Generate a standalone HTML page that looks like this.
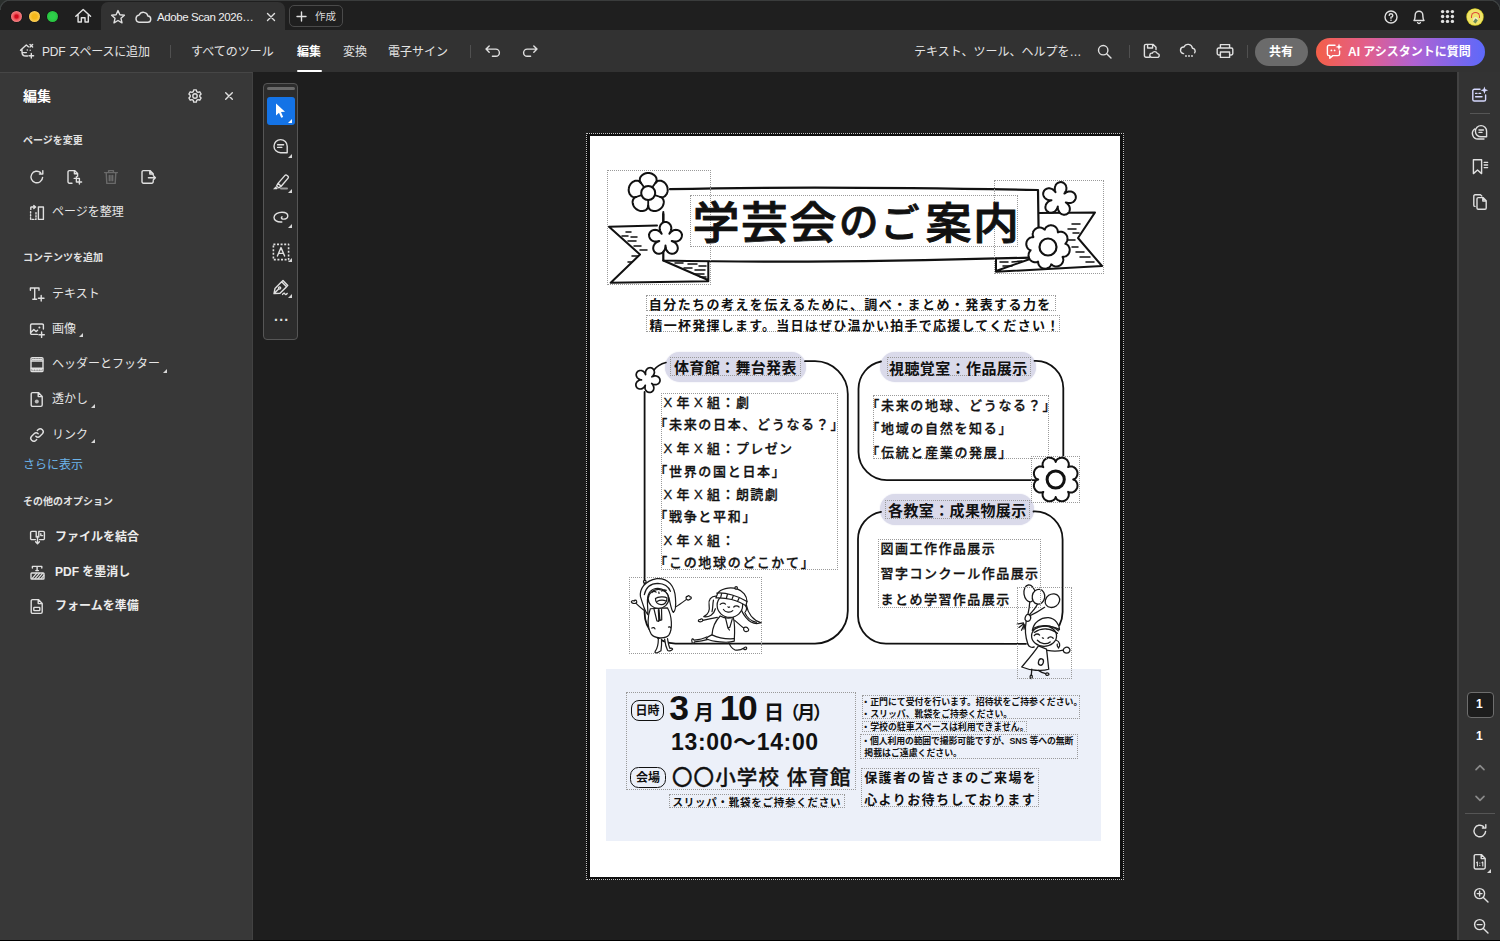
<!DOCTYPE html>
<html lang="ja">
<head>
<meta charset="utf-8">
<title>Adobe Scan</title>
<style>
*{box-sizing:border-box;margin:0;padding:0}
html,body{width:1500px;height:941px;overflow:hidden;background:#1e1e1e}
body{font-family:"Liberation Sans","Noto Sans CJK JP",sans-serif;color:#e6e6e6;font-size:12px;-webkit-font-smoothing:antialiased}
#app{position:relative;width:1500px;height:941px;overflow:hidden;background:#1e1e1e}
.abs{position:absolute}
.t{position:absolute;white-space:nowrap;line-height:1}
svg{position:absolute;overflow:visible}
.ic{fill:none;stroke:#e0e0e0;stroke-width:1.4;stroke-linecap:round;stroke-linejoin:round}
/* title bar */
#titlebar{position:absolute;left:0;top:0;width:1500px;height:30px;background:#1f1f1f}
#tab{position:absolute;left:101px;top:2px;width:184px;height:28px;background:#323232;border-radius:7px 7px 0 0}
#newbtn{position:absolute;left:289px;top:5px;width:54px;height:22px;border:1px solid #4a4a4a;border-radius:5px}
.dot{position:absolute;top:11.1px;width:11px;height:11px;border-radius:50%;box-shadow:0 0 0 .6px rgba(0,0,0,.5)}
/* toolbar */
#toolbar{position:absolute;left:0;top:30px;width:1500px;height:42px;background:#323232}
.sep{position:absolute;width:1px;background:#505050}
/* left panel */
#left{position:absolute;left:0;top:72px;width:253px;height:869px;background:#383838;border-top:1px solid #464646;border-right:1px solid #424242}
/* float bar */
#float{position:absolute;left:263px;top:83px;width:35px;height:257px;background:#2c2c2c;border:1px solid #565656;border-radius:4px}
/* right rail */
#right{position:absolute;left:1457px;top:72px;width:43px;height:869px;background:#333;border-left:2px solid #424242}
/* page */
#pagewrap{position:absolute;left:586px;top:133px;width:538px;height:747px;background:#101010;border:1px dotted #c4c4c4}
#page{position:absolute;left:589.6px;top:135.6px;width:530.6px;height:741.8px;background:#fff;color:#111;font-family:"Liberation Sans","Noto Sans CJK JP",sans-serif}
.tri{position:absolute;width:0;height:0;border-left:4px solid transparent;border-bottom:4px solid #d8d8d8}
#doc{position:absolute;left:0;top:0;width:0;height:0}
.d{position:absolute;white-space:nowrap;line-height:1;color:#111}
.db{position:absolute;border:1px dotted #9a9a9a}
</style>
</head>
<body>
<div id="app">

<!-- TITLEBAR -->
<div id="titlebar">
  <div class="abs" style="left:0;top:0;width:1500px;height:1px;background:#3a3c3c"></div>
  <div class="abs" style="left:0;top:0;width:10px;height:10px;background:radial-gradient(circle at 10px 10px,rgba(0,0,0,0) 0 9px,#3c4040 9.4px 10.2px,#2a2e2c 10.8px)"></div>
  <div class="abs" style="left:1490px;top:0;width:10px;height:10px;background:radial-gradient(circle at 0px 10px,rgba(0,0,0,0) 0 9px,#3c4040 9.4px 10.2px,#26282c 10.8px)"></div>
  <div class="dot" style="left:11.1px;background:radial-gradient(circle,#cf0a1c 0 18%,#ee5a5e 42%,#f28084 70%)"></div>
  <div class="dot" style="left:28.8px;background:radial-gradient(circle,#f5b81a 0 30%,#fbd061 75%)"></div>
  <div class="dot" style="left:46.5px;background:radial-gradient(circle,#2ed04a 0 30%,#27c03e 75%)"></div>
  <svg style="left:75px;top:8.4px" width="16.4" height="16.4" viewBox="0 0 16 16"><path class="ic" d="M0.8 8 L8 1.4 L15.2 8 M3 6.4 V13.6 H6.2 V9.6 H9.8 V13.6 H13 V6.4"/></svg>
  <div id="tab"></div>
  <svg style="left:110px;top:9px" width="16" height="16" viewBox="0 0 16 16"><path class="ic" d="M8 1.6 L9.9 5.8 L14.4 6.3 L11 9.3 L12 13.8 L8 11.5 L4 13.8 L5 9.3 L1.6 6.3 L6.1 5.8 Z"/></svg>
  <svg style="left:134px;top:10px" width="18" height="14" viewBox="0 0 18 14"><path class="ic" d="M4.6 12.2 H13.4 A3.1 3.1 0 0 0 13.9 6 A4.6 4.6 0 0 0 5.2 5 A3.7 3.7 0 0 0 4.6 12.2 Z"/></svg>
  <div class="t" id="tabtxt" style="left:157px;top:11.7px;font-size:11.5px;letter-spacing:-0.42px;color:#f0f0f0">Adobe Scan 2026…</div>
  <svg style="left:267px;top:13px" width="8" height="8" viewBox="0 0 8 8"><path class="ic" d="M0.5 0.5 L7.5 7.5 M7.5 0.5 L0.5 7.5"/></svg>
  <div id="newbtn"></div>
  <svg style="left:297px;top:12px" width="9" height="9" viewBox="0 0 9 9"><path class="ic" d="M4.5 0 V9 M0 4.5 H9"/></svg>
  <div class="t" style="left:315px;top:11px;font-size:10.5px;color:#d8d8d8">作成</div>
  <!-- right icons -->
  <svg style="left:1384px;top:10px" width="14" height="14" viewBox="0 0 14 14"><circle class="ic" cx="7" cy="7" r="6"/><path class="ic" d="M5.2 5.4 A1.8 1.8 0 1 1 7 7.3 V8.2"/><circle cx="7" cy="10.3" r="0.8" fill="#e0e0e0"/></svg>
  <svg style="left:1412px;top:9px" width="14" height="16" viewBox="0 0 14 16"><path class="ic" d="M2 11.5 C3.2 10 3 8.5 3.2 6 A3.8 3.8 0 0 1 10.8 6 C11 8.5 10.8 10 12 11.5 Z M5.6 13.6 A1.5 1.5 0 0 0 8.4 13.6"/></svg>
  <svg style="left:1441px;top:10.2px" width="13" height="13" viewBox="0 0 13 13" fill="#e0e0e0"><circle cx="1.6" cy="1.6" r="1.7"/><circle cx="6.5" cy="1.6" r="1.7"/><circle cx="11.4" cy="1.6" r="1.7"/><circle cx="1.6" cy="6.5" r="1.7"/><circle cx="6.5" cy="6.5" r="1.7"/><circle cx="11.4" cy="6.5" r="1.7"/><circle cx="1.6" cy="11.4" r="1.7"/><circle cx="6.5" cy="11.4" r="1.7"/><circle cx="11.4" cy="11.4" r="1.7"/></svg>
  <div class="abs" style="left:1467.3px;top:8.6px;width:16px;height:16px;border-radius:50%;background:#efe36a;overflow:hidden;box-shadow:0 0 0 .7px #d8d020"><div class="abs" style="left:3.5px;top:3.6px;width:9px;height:6px;border-radius:5px 5px 0 0;border:1.8px solid #dc4a3c;border-bottom:none"></div><div class="abs" style="left:6px;top:8px;width:5px;height:5px;border-radius:50%;background:#f3ecc0"></div><div class="abs" style="left:7px;top:10px;width:3px;height:4px;background:#6a8a5a;transform:rotate(35deg)"></div></div>
</div>

<!-- TOOLBAR -->
<div id="toolbar">
  <!-- pdf space icon -->
  <svg style="left:19px;top:13px" width="17" height="17" viewBox="0 0 17 17"><path class="ic" d="M1.5 7.2 L7.3 2 L9.4 3.8 M3 6.3 V9.2 C3 11.8 4.2 13 7 13 H8.6 M3.4 9.6 H7.4"/><path class="ic" d="M11 1.5 L13.6 4.1 M13.6 1.5 L11 4.1 M12.3 10.4 V15 M10 12.7 H14.6" /><circle cx="8.3" cy="7" r=".8" fill="#e0e0e0"/><circle cx="11.2" cy="7.3" r=".7" fill="#e0e0e0"/></svg>
  <div class="t" style="left:42px;top:16px;font-size:12px;letter-spacing:-0.2px;color:#e4e4e4">PDF スペースに追加</div>
  <div class="sep" style="left:170px;top:15px;height:13px"></div>
  <div class="t" style="left:191px;top:16px;font-size:12px;color:#e4e4e4">すべてのツール</div>
  <div class="t" style="left:297px;top:16px;font-size:12px;color:#fff;font-weight:700">編集</div>
  <div class="abs" style="left:297px;top:40px;width:25px;height:2px;background:#fff;border-radius:1px"></div>
  <div class="t" style="left:343px;top:16px;font-size:12px;color:#e4e4e4">変換</div>
  <div class="t" style="left:388px;top:16px;font-size:12px;color:#e4e4e4">電子サイン</div>
  <div class="sep" style="left:470px;top:15px;height:13px"></div>
  <svg style="left:485px;top:15px" width="16" height="13" viewBox="0 0 16 13"><path class="ic" d="M4.2 1 L1 4.1 L4.2 7.2 M1.2 4.1 H10.8 A3.6 3.6 0 0 1 10.8 11.3 H7.4"/></svg>
  <svg style="left:522px;top:15px" width="16" height="13" viewBox="0 0 16 13"><path class="ic" d="M11.8 1 L15 4.1 L11.8 7.2 M14.8 4.1 H5.2 A3.6 3.6 0 0 0 5.2 11.3 H8.6"/></svg>
  <!-- right side -->
  <div class="t" style="left:914px;top:16px;font-size:12px;color:#e4e4e4">テキスト、ツール、ヘルプを…</div>
  <svg style="left:1097px;top:14px" width="15" height="15" viewBox="0 0 15 15"><circle class="ic" cx="6.2" cy="6.2" r="4.7"/><path class="ic" d="M9.7 9.7 L14 14"/></svg>
  <div class="sep" style="left:1129px;top:15px;height:13px"></div>
  <svg style="left:1143px;top:13px" width="17" height="16" viewBox="0 0 17 16"><path class="ic" d="M6.5 14.2 H3 A1.6 1.6 0 0 1 1.4 12.6 V3 A1.6 1.6 0 0 1 3 1.4 H10.2 L13 4.2 V6.6 M4.6 1.6 V5 H9.6 V1.6"/><path class="ic" d="M8.6 14.4 H14.2 A1.9 1.9 0 0 0 14.4 10.6 A2.8 2.8 0 0 0 9.2 10.2 A2.1 2.1 0 0 0 8.6 14.4 Z"/></svg>
  <svg style="left:1179px;top:14px" width="18" height="14" viewBox="0 0 18 14"><path class="ic" d="M4.6 9.6 A3.3 3.3 0 0 1 5 3 A4.4 4.4 0 0 1 13.4 4.2 A2.9 2.9 0 0 1 15.6 8.8"/><circle cx="7" cy="12" r=".9" fill="#e0e0e0"/><circle cx="10" cy="12" r=".9" fill="#e0e0e0"/><circle cx="13" cy="12" r=".9" fill="#e0e0e0"/></svg>
  <svg style="left:1216px;top:13px" width="18" height="16" viewBox="0 0 18 16"><path class="ic" d="M4.4 5 V1.6 H13.6 V5 M4.4 12 H2.6 A1.4 1.4 0 0 1 1.2 10.6 V6.4 A1.4 1.4 0 0 1 2.6 5 H15.4 A1.4 1.4 0 0 1 16.8 6.4 V10.6 A1.4 1.4 0 0 1 15.4 12 H13.6 M4.4 9 H13.6 V14.4 H4.4 Z"/></svg>
  <div class="sep" style="left:1247px;top:15px;height:13px"></div>
  <div class="abs" style="left:1255px;top:7.6px;width:53px;height:28.2px;border-radius:15px;background:#6b6b6b"></div>
  <div class="t" style="left:1269px;top:16px;font-size:12px;color:#fff;font-weight:700">共有</div>
  <div class="abs" style="left:1316px;top:7.6px;width:169px;height:28.2px;border-radius:15px;background:linear-gradient(90deg,#f45f48 0%,#e25f8c 30%,#b062d2 58%,#5d69fa 100%)"></div>
  <svg style="left:1326px;top:13px" width="17" height="17" viewBox="0 0 17 17"><path class="ic" style="stroke:#fff" d="M9 2.2 H3 A1.6 1.6 0 0 0 1.4 3.8 V11 A1.6 1.6 0 0 0 3 12.6 H3.8 V15.2 L6.8 12.6 H12 A1.6 1.6 0 0 0 13.6 11 V8"/><path fill="#fff" d="M13 0.4 L13.9 3 L16.5 3.9 L13.9 4.8 L13 7.4 L12.1 4.8 L9.5 3.9 L12.1 3 Z"/><circle cx="5.4" cy="7.4" r=".9" fill="#fff"/><circle cx="8.6" cy="7.4" r=".9" fill="#fff"/></svg>
  <div class="t" style="left:1348px;top:16px;font-size:12px;color:#fff;font-weight:700">AI アシスタントに質問</div>
</div>

<!-- LEFT PANEL -->
<div id="left">
  <div class="t" style="left:23px;top:16px;font-size:14px;font-weight:700;color:#fff">編集</div>
  <!-- gear -->
  <svg style="left:187px;top:15px" width="16" height="16" viewBox="0 0 16 16"><path class="ic" d="M6.7 1.2 H9.3 L9.7 3 L11 3.7 L12.8 3.1 L14.1 5.3 L12.8 6.6 V8 L14.1 9.3 L12.8 11.5 L11 10.9 L9.7 11.6 L9.3 13.4 H6.7 L6.3 11.6 L5 10.9 L3.2 11.5 L1.9 9.3 L3.2 8 V6.6 L1.9 5.3 L3.2 3.1 L5 3.7 L6.3 3 Z" transform="translate(0,0.7)"/><circle class="ic" cx="8" cy="8" r="2.2"/></svg>
  <svg style="left:225px;top:19px" width="8" height="8" viewBox="0 0 8 8"><path class="ic" d="M0.7 0.7 L7.3 7.3 M7.3 0.7 L0.7 7.3"/></svg>
  <div class="t" style="left:23px;top:63px;font-size:10px;font-weight:700;color:#e2e2e2">ページを変更</div>
  <!-- rotate -->
  <svg style="left:29px;top:96px" width="16" height="16" viewBox="0 0 16 16"><path class="ic" d="M13.6 8.4 A5.8 5.8 0 1 1 11.6 3.6 M13.8 1.6 V5 H10.4"/></svg>
  <!-- insert page -->
  <svg style="left:66px;top:96px" width="17" height="17" viewBox="0 0 17 17"><path class="ic" d="M6 14.2 H3.4 A1.4 1.4 0 0 1 2 12.8 V3 A1.4 1.4 0 0 1 3.4 1.6 H8.6 L11.6 4.6 V7.2 M8.4 1.8 V4.8 H11.4"/><path class="ic" d="M8.2 9.4 H13.4 V15 M10.4 7.6 V13 H15.6" /></svg>
  <!-- trash (disabled) -->
  <svg style="left:103px;top:96px" width="16" height="16" viewBox="0 0 16 16"><path class="ic" style="stroke:#6a6a6a" d="M1.6 3.6 H14.4 M5.6 3.4 V1.6 H10.4 V3.4 M3.2 3.8 L3.8 14.4 H12.2 L12.8 3.8 M6.3 6.4 V11.8 M8 6.4 V11.8 M9.7 6.4 V11.8"/></svg>
  <!-- extract -->
  <svg style="left:140px;top:96px" width="17" height="17" viewBox="0 0 17 17"><path class="ic" d="M13.2 11.6 V12.8 A1.4 1.4 0 0 1 11.8 14.2 H3.4 A1.4 1.4 0 0 1 2 12.8 V3 A1.4 1.4 0 0 1 3.4 1.6 H10 L13.2 4.8 V6 M9.8 1.8 V5 H13 M8.4 8.8 H15.4 M13.4 6.8 L15.4 8.8 L13.4 10.8"/></svg>
  <!-- organize -->
  <svg style="left:29px;top:132px" width="16" height="16" viewBox="0 0 16 16"><path class="ic" d="M9.4 2 H14.4 V14.4 H9.4 Z"/><path class="ic" style="stroke-dasharray:1.4 1.7" d="M1.6 6.6 V14.4 H7 V6.6"/><path class="ic" d="M2.2 2 H6.6 M4.8 0.6 L6.6 2 L4.8 3.6 M1.8 2.2 V4.4"/></svg>
  <div class="t" style="left:52px;top:133px;font-size:12px">ページを整理</div>
  <div class="t" style="left:23px;top:180px;font-size:10px;font-weight:700;color:#e2e2e2">コンテンツを追加</div>
  <!-- text -->
  <svg style="left:29px;top:213px" width="17" height="17" viewBox="0 0 17 17"><path class="ic" d="M1.4 4.2 V2 H10 V4.2 M5.7 2.2 V13 M3.8 13.2 H7.6 M12.2 9.4 V15 M9.4 12.2 H15"/></svg>
  <div class="t" style="left:52px;top:215px;font-size:12px">テキスト</div>
  <!-- image -->
  <svg style="left:29px;top:249px" width="17" height="17" viewBox="0 0 17 17"><path class="ic" d="M8.4 12.4 H2.8 A1.2 1.2 0 0 1 1.6 11.2 V3.2 A1.2 1.2 0 0 1 2.8 2 H13.2 A1.2 1.2 0 0 1 14.4 3.2 V7 M1.8 10.4 L4.8 7.6 L7 9.6 L8.6 8.2 M12.6 10 V15.4 M9.9 12.7 H15.3"/><circle cx="10.4" cy="5.4" r="1" fill="#e0e0e0"/></svg>
  <div class="t" style="left:52px;top:250px;font-size:12px">画像</div>
  <div class="tri" style="left:79px;top:260px"></div>
  <!-- header/footer -->
  <svg style="left:29px;top:283px" width="16" height="17" viewBox="0 0 16 17"><rect class="ic" x="2" y="1.6" width="12" height="14" rx="1.2"/><path class="ic" d="M2.2 5 H13.8 M2.2 12.2 H13.8"/><path class="ic" style="stroke-dasharray:1.2 1.4;stroke-width:1.6" d="M3.6 3.4 H12.6 M3.6 13.9 H12.6"/></svg>
  <div class="t" style="left:52px;top:285px;font-size:12px">ヘッダーとフッター</div>
  <div class="tri" style="left:163px;top:296px"></div>
  <!-- watermark -->
  <svg style="left:29px;top:318px" width="16" height="17" viewBox="0 0 16 17"><path class="ic" d="M3.6 1.6 H9.4 L13.2 5.4 V14 A1.4 1.4 0 0 1 11.8 15.4 H3.6 A1.4 1.4 0 0 1 2.2 14 V3 A1.4 1.4 0 0 1 3.6 1.6 Z M9.2 1.8 V5.6 H13"/><circle cx="7.8" cy="10.4" r="2" fill="#bdbdbd"/></svg>
  <div class="t" style="left:52px;top:320px;font-size:12px">透かし</div>
  <div class="tri" style="left:91px;top:331px"></div>
  <!-- link -->
  <svg style="left:29px;top:354px" width="16" height="16" viewBox="0 0 16 16"><path class="ic" d="M6.8 9.2 A2.9 2.9 0 0 0 10.9 9.2 L13.4 6.7 A2.9 2.9 0 0 0 9.3 2.6 L8.3 3.6 M9.2 6.8 A2.9 2.9 0 0 0 5.1 6.8 L2.6 9.3 A2.9 2.9 0 0 0 6.7 13.4 L7.7 12.4"/></svg>
  <div class="t" style="left:52px;top:356px;font-size:12px">リンク</div>
  <div class="tri" style="left:91px;top:366px"></div>
  <div class="t" style="left:23px;top:386px;font-size:12px;color:#6cb4ea">さらに表示</div>
  <div class="t" style="left:23px;top:424px;font-size:10px;font-weight:700;color:#e2e2e2">その他のオプション</div>
  <!-- combine -->
  <svg style="left:29px;top:456px" width="17" height="17" viewBox="0 0 17 17"><path class="ic" d="M6.4 10.6 H2.8 A1.2 1.2 0 0 1 1.6 9.4 V3.6 A1.2 1.2 0 0 1 2.8 2.4 H7.2 V8 M10.6 10.6 H14.2 A1.2 1.2 0 0 0 15.4 9.4 V3.6 A1.2 1.2 0 0 0 14.2 2.4 H9.8 V8 M8.5 7.4 V14.6 M6.6 12.8 L8.5 14.8 L10.4 12.8 M11.8 4.6 V6.6 H13.6"/></svg>
  <div class="t" style="left:55px;top:458px;font-size:12px;font-weight:700;color:#ececec">ファイルを結合</div>
  <!-- redact -->
  <svg style="left:29px;top:491px" width="17" height="17" viewBox="0 0 17 17"><path class="ic" d="M3.4 4 V2.4 H12.8 V4 M8.1 2.6 V6.4 M6.8 6.6 H9.4"/><rect class="ic" x="2" y="9" width="13" height="6" rx=".8"/><path class="ic" style="stroke-width:1.2" d="M3 14.6 L7.6 9.4 M6 14.6 L10.6 9.4 M9 14.6 L13.6 9.4 M12 14.6 L14.8 11.4"/></svg>
  <div class="t" style="left:55px;top:493px;font-size:12px;font-weight:700;color:#ececec">PDF を墨消し</div>
  <!-- form -->
  <svg style="left:29px;top:525px" width="16" height="17" viewBox="0 0 16 17"><path class="ic" d="M3.6 1.6 H9.4 L13.2 5.4 V14 A1.4 1.4 0 0 1 11.8 15.4 H3.6 A1.4 1.4 0 0 1 2.2 14 V3 A1.4 1.4 0 0 1 3.6 1.6 Z M9.2 1.8 V5.6 H13"/><rect class="ic" x="4.8" y="9.4" width="6" height="3.2" rx=".5"/></svg>
  <div class="t" style="left:55px;top:527px;font-size:12px;font-weight:700;color:#ececec">フォームを準備</div>
</div>

<!-- FLOAT BAR -->
<div id="float">
  <div class="abs" style="left:3px;top:3.3px;width:28px;height:3px;border-radius:2px;background:#6a6a6a"></div>
  <div class="abs" style="left:3px;top:13px;width:28px;height:28px;border-radius:3px;background:#1473e6"></div>
  <svg style="left:11px;top:19px" width="12" height="16" viewBox="0 0 12 16"><path fill="#fff" d="M1 0.6 V12.4 L4 9.8 L6.2 14.8 L8.2 13.9 L6 9 L10 8.8 Z"/></svg>
  <div class="tri" style="left:23.5px;top:35px;border-bottom-color:#fff"></div>
  <!-- comment -->
  <svg style="left:8px;top:54px" width="18" height="18" viewBox="0 0 18 18"><path class="ic" d="M8.6 1.6 A6.6 6.6 0 1 0 8.6 14.8 H15.2 V8.2 A6.6 6.6 0 0 0 8.6 1.6 Z M5.6 6.8 H11.6 M5.6 9.4 H9.8"/></svg>
  <div class="tri" style="left:23.5px;top:70px"></div>
  <!-- highlight -->
  <svg style="left:8px;top:89px" width="19" height="18" viewBox="0 0 19 18"><path class="ic" d="M6 10.4 L13 2.4 A1.3 1.3 0 0 1 14.9 2.3 L16 3.3 A1.3 1.3 0 0 1 16.1 5.1 L9.2 13.2 Z M6 10.4 L4.6 13 L6.8 14.8 L9.2 13.2"/><path fill="#e0e0e0" d="M1 16.2 L3.6 13.4 L5.8 15.2 L5 16.2 Z"/><path class="ic" style="stroke:#9a9a9a;stroke-width:2" d="M9 15.4 H15"/></svg>
  <div class="tri" style="left:23.5px;top:105px"></div>
  <!-- lasso -->
  <svg style="left:8px;top:125px" width="19" height="17" viewBox="0 0 19 17"><path class="ic" d="M9.8 13 C5 13.4 2 11.2 2 8.4 C2 5.4 6 3.2 10 3.2 C13.6 3.2 15.8 4.8 15.8 7 C15.8 9.4 13 10.6 10.6 10 C9.2 9.6 9 8.4 10 7.8"/></svg>
  <div class="tri" style="left:23.5px;top:140px"></div>
  <!-- text select -->
  <svg style="left:8px;top:159px" width="18" height="18" viewBox="0 0 18 18"><rect class="ic" style="stroke-dasharray:2 1.6;stroke-linecap:butt;stroke-width:1.6" x="1.4" y="1.4" width="15.2" height="15.2"/><path class="ic" d="M5.4 13 L9 4.6 L12.6 13 M6.6 10.4 H11.4"/></svg>
  <div class="tri" style="left:23.5px;top:174px"></div>
  <!-- sign pen -->
  <svg style="left:8px;top:195px" width="19" height="18" viewBox="0 0 19 18"><path class="ic" d="M2 14.6 L3 9.4 L9.6 2.8 L14.6 7.8 L8 14.2 L2 14.6 Z M2.4 14.2 L6.6 10 M8.4 4 L11 1.6 L15.8 6.4 L13.4 9"/><circle class="ic" cx="7.6" cy="9" r="1.1"/><path class="ic" d="M10.6 15.4 C11.6 13.8 12.6 13.8 13 15 C13.4 16 14.4 15.8 15.2 14.4"/></svg>
  <div class="tri" style="left:23.5px;top:210px"></div>
  <div class="t" style="left:10px;top:229px;font-size:14px;color:#e0e0e0;letter-spacing:0.5px;font-weight:700">···</div>
</div>

<!-- RIGHT RAIL -->
<div id="right">
  <!-- AI panel icon -->
  <svg style="left:12px;top:14px" width="18" height="18" viewBox="0 0 18 18"><path class="ic" style="stroke:#d6d9ff" d="M9 3.2 H3.4 A1.6 1.6 0 0 0 1.8 4.8 V13.4 A1.6 1.6 0 0 0 3.4 15 H13 A1.6 1.6 0 0 0 14.6 13.4 V9 M4.6 7.4 H6 M8 7.4 H9.6 M4.6 10.8 H11"/><path fill="#d6d9ff" d="M13.4 0.4 L14.4 3.2 L17.2 4.2 L14.4 5.2 L13.4 8 L12.4 5.2 L9.6 4.2 L12.4 3.2 Z"/></svg>
  <div class="abs" style="left:11px;top:41px;width:20px;height:1px;background:#555"></div>
  <!-- comments -->
  <svg style="left:12px;top:52px" width="18" height="18" viewBox="0 0 18 18"><path class="ic" d="M10 1.6 A5.6 5.6 0 1 0 10 12.8 H15.6 V7.2 A5.6 5.6 0 0 0 10 1.6 Z M8 6 H12.4 M8 8.4 H11"/><path class="ic" d="M3.6 5 A5.6 5.6 0 0 0 7.4 15 H13"/></svg>
  <!-- bookmark -->
  <svg style="left:12px;top:86px" width="18" height="18" viewBox="0 0 18 18"><path class="ic" d="M2.4 1.8 H10.6 V15.6 L6.5 12 L2.4 15.6 Z M13.2 4.4 H16.6 M13.2 7 H16.6 M13.2 9.6 H16.6"/></svg>
  <!-- pages -->
  <svg style="left:12px;top:121px" width="18" height="18" viewBox="0 0 18 18"><path class="ic" d="M7.2 4.6 H12 L15.2 7.8 V15 A1.2 1.2 0 0 1 14 16.2 H7.2 A1.2 1.2 0 0 1 6 15 V5.8 A1.2 1.2 0 0 1 7.2 4.6 Z M11.8 4.8 V8 H15 M4 13.4 A1.2 1.2 0 0 1 2.8 12.2 V3 A1.2 1.2 0 0 1 4 1.8 H9.4 L10.8 3"/></svg>
  <!-- page number -->
  <div class="abs" style="left:8px;top:620px;width:27px;height:26px;border:1px solid #6e6e6e;border-radius:4px;background:#1d1d1d"></div>
  <div class="t" style="left:17px;top:626px;font-size:12px;color:#fff;font-weight:700">1</div>
  <div class="t" style="left:17px;top:658px;font-size:12px;color:#fff;font-weight:700">1</div>
  <svg style="left:16px;top:692px" width="10" height="7" viewBox="0 0 10 7"><path class="ic" style="stroke:#8c8c8c;stroke-width:1.6" d="M1 5.6 L5 1.6 L9 5.6"/></svg>
  <svg style="left:16px;top:723px" width="10" height="7" viewBox="0 0 10 7"><path class="ic" style="stroke:#8c8c8c;stroke-width:1.6" d="M1 1.4 L5 5.4 L9 1.4"/></svg>
  <div class="abs" style="left:6px;top:741px;width:30px;height:1px;background:#555"></div>
  <svg style="left:13px;top:751px" width="16" height="16" viewBox="0 0 16 16"><path class="ic" d="M13.6 8.4 A5.8 5.8 0 1 1 11.6 3.6 M13.8 1.6 V5 H10.4"/></svg>
  <svg style="left:13px;top:781px" width="16" height="18" viewBox="0 0 16 18"><path class="ic" d="M3.6 1.6 H9.4 L13.2 5.4 V14.6 A1.4 1.4 0 0 1 11.8 16 H3.6 A1.4 1.4 0 0 1 2.2 14.6 V3 A1.4 1.4 0 0 1 3.6 1.6 Z M9.2 1.8 V5.6 H13"/><path class="ic" style="stroke-width:1.1" d="M4.6 9.6 L5.4 9 V13 M10 9.6 L10.8 9 V13"/><circle cx="7.8" cy="10" r=".6" fill="#e0e0e0"/><circle cx="7.8" cy="12.4" r=".6" fill="#e0e0e0"/></svg>
  <div class="tri" style="left:28px;top:797px"></div>
  <svg style="left:14.2px;top:814.6px" width="16" height="16" viewBox="0 0 16 16"><circle class="ic" cx="6.6" cy="6.6" r="5"/><path class="ic" d="M10.4 10.4 L15 15 M4.2 6.6 H9 M6.6 4.2 V9"/></svg>
  <svg style="left:14.2px;top:846.2px" width="16" height="16" viewBox="0 0 16 16"><circle class="ic" cx="6.6" cy="6.6" r="5"/><path class="ic" d="M10.4 10.4 L15 15 M4.2 6.6 H9"/></svg>
</div>

<div class="abs" style="left:0;top:940px;width:1500px;height:1px;background:#000"></div>
<!-- PAGE -->
<div id="pagewrap"></div>
<div id="page"></div>
<!-- DOC START -->
<div id="doc">
<div class="abs" style="left:605.5px;top:668.5px;width:495px;height:172.5px;background:#ecf0f9"></div>
<div class="abs" style="left:665px;top:351.8px;width:140.5px;height:30.599999999999966px;border-radius:15.3px;background:#dadaea;box-shadow:0 0 1.5px #dadaea"></div>
<div class="abs" style="left:880px;top:351.8px;width:156.0px;height:30.599999999999966px;border-radius:15.3px;background:#dadaea;box-shadow:0 0 1.5px #dadaea"></div>
<div class="abs" style="left:880px;top:494.3px;width:154.0px;height:30.69999999999999px;border-radius:15.3px;background:#dadaea;box-shadow:0 0 1.5px #dadaea"></div>
<svg style="left:0;top:0" width="1500" height="941" viewBox="0 0 1500 941">
<path fill="none" stroke="#111" stroke-linecap="round" stroke-linejoin="round" stroke-width="2.2" d="M670 189.2 C760 187 860 186.6 1038 190 L1039 258"/>
<path fill="none" stroke="#111" stroke-linecap="round" stroke-linejoin="round" stroke-width="2.2" d="M663.3 214 L663.3 260.5 C760 262.5 900 261.5 1030 257.6"/>
<path fill="none" stroke="#111" stroke-linecap="round" stroke-linejoin="round" stroke-width="2" d="M657 225.6 L609 226.8 L640 254.5 L610.7 282.8 L708.3 281.2 L708.3 262 M663.3 260.5 L708 280"/>
<path fill="none" stroke="#111" stroke-linecap="round" stroke-linejoin="round" stroke-width="1.5" d="M626 232 L631 232"/>
<path fill="none" stroke="#111" stroke-linecap="round" stroke-linejoin="round" stroke-width="1.5" d="M622 236 L628 236"/>
<path fill="none" stroke="#111" stroke-linecap="round" stroke-linejoin="round" stroke-width="1.5" d="M631 237 L637 237"/>
<path fill="none" stroke="#111" stroke-linecap="round" stroke-linejoin="round" stroke-width="1.5" d="M628 241 L636 241"/>
<path fill="none" stroke="#111" stroke-linecap="round" stroke-linejoin="round" stroke-width="1.5" d="M634 246 L641 246"/>
<path fill="none" stroke="#111" stroke-linecap="round" stroke-linejoin="round" stroke-width="1.5" d="M640 250 L647 250"/>
<path fill="none" stroke="#111" stroke-linecap="round" stroke-linejoin="round" stroke-width="1.5" d="M632 256 L638 256"/>
<path fill="none" stroke="#111" stroke-linecap="round" stroke-linejoin="round" stroke-width="1.5" d="M628 262 L632 262"/>
<path fill="none" stroke="#111" stroke-linecap="round" stroke-linejoin="round" stroke-width="1.5" d="M675 263 L683 263"/>
<path fill="none" stroke="#111" stroke-linecap="round" stroke-linejoin="round" stroke-width="1.5" d="M688 264 L697 264"/>
<path fill="none" stroke="#111" stroke-linecap="round" stroke-linejoin="round" stroke-width="1.5" d="M699 266 L706 266"/>
<path fill="none" stroke="#111" stroke-linecap="round" stroke-linejoin="round" stroke-width="1.5" d="M684 268 L692 268"/>
<path fill="none" stroke="#111" stroke-linecap="round" stroke-linejoin="round" stroke-width="1.5" d="M695 270 L705 270"/>
<path fill="none" stroke="#111" stroke-linecap="round" stroke-linejoin="round" stroke-width="1.5" d="M694 274 L704 274"/>
<path fill="none" stroke="#111" stroke-linecap="round" stroke-linejoin="round" stroke-width="1.5" d="M700 277 L706 277"/>
<path fill="none" stroke="#111" stroke-linecap="round" stroke-linejoin="round" stroke-width="2" d="M1039 213 L1095 212.4 L1078 238 L1102 266 L996 271.8 L996 258.5 M996 271 L1030 259"/>
<path fill="none" stroke="#111" stroke-linecap="round" stroke-linejoin="round" stroke-width="1.5" d="M1072 224 L1080 224"/>
<path fill="none" stroke="#111" stroke-linecap="round" stroke-linejoin="round" stroke-width="1.5" d="M1068 229 L1076 229"/>
<path fill="none" stroke="#111" stroke-linecap="round" stroke-linejoin="round" stroke-width="1.5" d="M1073 233 L1079 233"/>
<path fill="none" stroke="#111" stroke-linecap="round" stroke-linejoin="round" stroke-width="1.5" d="M1068 240 L1075 240"/>
<path fill="none" stroke="#111" stroke-linecap="round" stroke-linejoin="round" stroke-width="1.5" d="M1072 247 L1078 247"/>
<path fill="none" stroke="#111" stroke-linecap="round" stroke-linejoin="round" stroke-width="1.5" d="M1076 252 L1084 252"/>
<path fill="none" stroke="#111" stroke-linecap="round" stroke-linejoin="round" stroke-width="1.5" d="M1080 257 L1090 257"/>
<path fill="none" stroke="#111" stroke-linecap="round" stroke-linejoin="round" stroke-width="1.5" d="M1086 262 L1094 262"/>
<path fill="none" stroke="#111" stroke-linecap="round" stroke-linejoin="round" stroke-width="1.5" d="M1000 262 L1008 262"/>
<path fill="none" stroke="#111" stroke-linecap="round" stroke-linejoin="round" stroke-width="1.5" d="M1003 266 L1012 266"/>
<path fill="none" stroke="#111" stroke-linecap="round" stroke-linejoin="round" stroke-width="1.5" d="M1012 262 L1022 261"/>
<path fill="#fff" stroke="#111" stroke-linecap="round" stroke-linejoin="round" stroke-width="2" d="M667.1 193.0 L666.9 193.6 L666.6 194.2 L666.2 194.7 L665.8 195.2 L665.4 195.7 L664.8 196.2 L664.2 196.6 L663.5 196.9 L662.5 197.2 L660.1 196.9 L662.2 198.0 L662.8 198.8 L663.2 199.5 L663.5 200.2 L663.7 200.9 L663.8 201.6 L663.8 202.2 L663.7 202.9 L663.6 203.5 L663.5 204.1 L663.3 204.7 L663.1 205.3 L662.8 205.9 L662.5 206.4 L662.2 207.0 L661.8 207.5 L661.4 207.9 L660.9 208.4 L660.5 208.8 L660.0 209.2 L659.4 209.5 L658.9 209.9 L658.3 210.1 L657.8 210.4 L657.2 210.6 L656.6 210.8 L655.9 210.9 L655.3 211.0 L654.7 211.0 L654.0 211.0 L653.4 210.9 L652.8 210.8 L652.1 210.7 L651.5 210.4 L650.9 210.2 L650.3 209.8 L649.7 209.3 L649.2 208.7 L648.7 207.9 L648.2 205.5 L647.7 207.9 L647.2 208.7 L646.7 209.3 L646.1 209.8 L645.5 210.2 L644.9 210.4 L644.3 210.7 L643.6 210.8 L643.0 210.9 L642.4 211.0 L641.7 211.0 L641.1 211.0 L640.5 210.9 L639.8 210.8 L639.2 210.6 L638.6 210.4 L638.1 210.1 L637.5 209.9 L637.0 209.5 L636.4 209.2 L635.9 208.8 L635.5 208.4 L635.0 207.9 L634.6 207.5 L634.2 207.0 L633.9 206.4 L633.6 205.9 L633.3 205.3 L633.1 204.7 L632.9 204.1 L632.8 203.5 L632.7 202.9 L632.6 202.2 L632.6 201.6 L632.7 200.9 L632.9 200.2 L633.2 199.5 L633.6 198.8 L634.2 198.0 L636.3 196.9 L633.9 197.2 L632.9 196.9 L632.2 196.6 L631.6 196.2 L631.0 195.7 L630.6 195.2 L630.2 194.7 L629.8 194.2 L629.5 193.6 L629.3 193.0 L629.1 192.4 L628.9 191.8 L628.8 191.2 L628.7 190.5 L628.7 189.9 L628.7 189.3 L628.8 188.7 L628.9 188.0 L629.0 187.4 L629.2 186.8 L629.4 186.2 L629.6 185.7 L629.9 185.1 L630.3 184.6 L630.6 184.0 L631.0 183.5 L631.4 183.1 L631.9 182.6 L632.4 182.2 L632.9 181.9 L633.4 181.6 L634.0 181.3 L634.6 181.0 L635.3 180.8 L635.9 180.7 L636.6 180.7 L637.4 180.7 L638.2 180.9 L639.1 181.2 L640.9 182.9 L639.8 180.7 L639.8 179.7 L639.9 178.9 L640.0 178.2 L640.3 177.5 L640.6 176.9 L641.0 176.4 L641.4 175.9 L641.9 175.4 L642.4 175.0 L642.9 174.6 L643.4 174.3 L644.0 174.0 L644.5 173.7 L645.1 173.5 L645.7 173.3 L646.3 173.2 L646.9 173.1 L647.6 173.0 L648.2 173.0 L648.8 173.0 L649.5 173.1 L650.1 173.2 L650.7 173.3 L651.3 173.5 L651.9 173.7 L652.4 174.0 L653.0 174.3 L653.5 174.6 L654.0 175.0 L654.5 175.4 L655.0 175.9 L655.4 176.4 L655.8 176.9 L656.1 177.5 L656.4 178.2 L656.5 178.9 L656.6 179.7 L656.6 180.7 L655.5 182.9 L657.3 181.2 L658.2 180.9 L659.0 180.7 L659.8 180.7 L660.5 180.7 L661.1 180.8 L661.8 181.0 L662.4 181.3 L663.0 181.6 L663.5 181.9 L664.0 182.2 L664.5 182.6 L665.0 183.1 L665.4 183.5 L665.8 184.0 L666.1 184.6 L666.5 185.1 L666.8 185.7 L667.0 186.2 L667.2 186.8 L667.4 187.4 L667.5 188.0 L667.6 188.7 L667.7 189.3 L667.7 189.9 L667.7 190.5 L667.6 191.2 L667.5 191.8 L667.3 192.4 Z"/>
<path fill="none" stroke="#111" stroke-linecap="round" stroke-linejoin="round" stroke-width="1.8" d="M652.3 187.3 L655.7 182.6"/>
<path fill="none" stroke="#111" stroke-linecap="round" stroke-linejoin="round" stroke-width="1.8" d="M654.9 195.2 L660.4 197.0"/>
<path fill="none" stroke="#111" stroke-linecap="round" stroke-linejoin="round" stroke-width="1.8" d="M648.2 200.0 L648.2 205.8"/>
<path fill="none" stroke="#111" stroke-linecap="round" stroke-linejoin="round" stroke-width="1.8" d="M641.5 195.2 L636.0 197.0"/>
<path fill="none" stroke="#111" stroke-linecap="round" stroke-linejoin="round" stroke-width="1.8" d="M644.1 187.3 L640.7 182.6"/>
<circle fill="#fff" stroke="#111" stroke-linecap="round" stroke-linejoin="round" stroke-width="2" cx="648.2" cy="193" r="7"/>
<path fill="none" stroke="#111" stroke-linecap="round" stroke-linejoin="round" stroke-width="2" d="M663.3 212 L663.3 222"/>
<path fill="#fff" stroke="#111" stroke-linecap="round" stroke-linejoin="round" stroke-width="2" d="M680.7 239.0 L680.3 239.5 L679.8 239.9 L679.3 240.3 L678.7 240.7 L678.0 241.0 L677.3 241.2 L676.4 241.4 L675.5 241.6 L674.2 241.5 L671.7 241.0 L674.1 242.1 L675.1 242.8 L675.8 243.5 L676.4 244.1 L676.8 244.8 L677.2 245.4 L677.4 246.0 L677.6 246.7 L677.7 247.3 L677.8 247.9 L677.8 248.5 L677.7 249.1 L677.6 249.7 L677.4 250.2 L677.2 250.7 L676.9 251.2 L676.6 251.6 L676.3 252.0 L675.9 252.4 L675.5 252.8 L675.0 253.0 L674.6 253.3 L674.1 253.5 L673.6 253.6 L673.0 253.7 L672.5 253.8 L671.9 253.8 L671.3 253.7 L670.8 253.6 L670.2 253.4 L669.6 253.2 L669.1 252.9 L668.5 252.5 L668.0 252.1 L667.5 251.5 L667.0 250.9 L666.6 250.2 L666.1 249.3 L665.8 248.1 L665.5 245.5 L665.2 248.1 L664.9 249.3 L664.4 250.2 L664.0 250.9 L663.5 251.5 L663.0 252.1 L662.5 252.5 L661.9 252.9 L661.4 253.2 L660.8 253.4 L660.2 253.6 L659.7 253.7 L659.1 253.8 L658.5 253.8 L658.0 253.7 L657.4 253.6 L656.9 253.5 L656.4 253.3 L656.0 253.0 L655.5 252.8 L655.1 252.4 L654.7 252.0 L654.4 251.6 L654.1 251.2 L653.8 250.7 L653.6 250.2 L653.4 249.7 L653.3 249.1 L653.2 248.5 L653.2 247.9 L653.3 247.3 L653.4 246.7 L653.6 246.0 L653.8 245.4 L654.2 244.8 L654.6 244.1 L655.2 243.5 L655.9 242.8 L656.9 242.1 L659.3 241.0 L656.8 241.5 L655.5 241.6 L654.6 241.4 L653.7 241.2 L653.0 241.0 L652.3 240.7 L651.7 240.3 L651.2 239.9 L650.7 239.5 L650.3 239.0 L650.0 238.5 L649.7 238.0 L649.5 237.5 L649.3 237.0 L649.2 236.4 L649.1 235.9 L649.1 235.3 L649.1 234.8 L649.2 234.3 L649.3 233.7 L649.5 233.2 L649.8 232.8 L650.0 232.3 L650.4 231.9 L650.8 231.5 L651.2 231.1 L651.6 230.8 L652.1 230.5 L652.7 230.3 L653.2 230.1 L653.8 229.9 L654.5 229.9 L655.1 229.8 L655.8 229.9 L656.5 230.0 L657.3 230.2 L658.1 230.6 L658.9 231.1 L659.9 231.8 L661.7 233.7 L660.4 231.5 L660.0 230.3 L659.8 229.3 L659.7 228.5 L659.7 227.7 L659.8 227.0 L660.0 226.3 L660.2 225.7 L660.5 225.1 L660.8 224.6 L661.2 224.1 L661.6 223.7 L662.0 223.3 L662.4 222.9 L662.9 222.7 L663.4 222.4 L663.9 222.2 L664.4 222.1 L665.0 222.0 L665.5 222.0 L666.0 222.0 L666.6 222.1 L667.1 222.2 L667.6 222.4 L668.1 222.7 L668.6 222.9 L669.0 223.3 L669.4 223.7 L669.8 224.1 L670.2 224.6 L670.5 225.1 L670.8 225.7 L671.0 226.3 L671.2 227.0 L671.3 227.7 L671.3 228.5 L671.2 229.3 L671.0 230.3 L670.6 231.5 L669.3 233.7 L671.1 231.8 L672.1 231.1 L672.9 230.6 L673.7 230.2 L674.5 230.0 L675.2 229.9 L675.9 229.8 L676.5 229.9 L677.2 229.9 L677.8 230.1 L678.3 230.3 L678.9 230.5 L679.4 230.8 L679.8 231.1 L680.2 231.5 L680.6 231.9 L681.0 232.3 L681.2 232.8 L681.5 233.2 L681.7 233.7 L681.8 234.3 L681.9 234.8 L681.9 235.3 L681.9 235.9 L681.8 236.4 L681.7 237.0 L681.5 237.5 L681.3 238.0 L681.0 238.5 Z"/>
<path fill="#fff" stroke="#111" stroke-linecap="round" stroke-linejoin="round" stroke-width="2" d="M1075.5 199.0 L1075.3 199.5 L1075.0 200.0 L1074.7 200.5 L1074.3 200.9 L1073.9 201.4 L1073.4 201.8 L1072.9 202.1 L1072.3 202.4 L1071.6 202.7 L1070.9 202.9 L1070.1 203.0 L1069.2 203.1 L1068.2 203.0 L1066.9 202.7 L1065.8 202.5 L1067.2 203.5 L1068.0 204.4 L1068.6 205.1 L1069.1 205.8 L1069.4 206.5 L1069.6 207.2 L1069.8 207.9 L1069.8 208.6 L1069.8 209.2 L1069.8 209.8 L1069.7 210.4 L1069.5 210.9 L1069.3 211.5 L1069.1 212.0 L1068.8 212.4 L1068.4 212.8 L1068.0 213.2 L1067.6 213.6 L1067.2 213.9 L1066.7 214.1 L1066.2 214.4 L1065.7 214.5 L1065.2 214.6 L1064.7 214.7 L1064.1 214.7 L1063.5 214.7 L1063.0 214.6 L1062.4 214.4 L1061.9 214.2 L1061.4 213.9 L1060.8 213.6 L1060.3 213.2 L1059.9 212.7 L1059.4 212.2 L1059.0 211.5 L1058.6 210.8 L1058.3 210.0 L1058.1 209.0 L1057.9 207.7 L1057.8 206.5 L1057.2 208.2 L1056.7 209.3 L1056.2 210.0 L1055.6 210.7 L1055.0 211.2 L1054.5 211.6 L1053.9 212.0 L1053.3 212.3 L1052.7 212.5 L1052.1 212.6 L1051.5 212.7 L1050.9 212.7 L1050.3 212.7 L1049.8 212.6 L1049.2 212.4 L1048.7 212.2 L1048.3 212.0 L1047.8 211.7 L1047.4 211.4 L1047.0 211.0 L1046.6 210.6 L1046.3 210.2 L1046.0 209.7 L1045.8 209.2 L1045.6 208.7 L1045.5 208.2 L1045.4 207.6 L1045.4 207.0 L1045.5 206.4 L1045.6 205.9 L1045.7 205.3 L1045.9 204.7 L1046.2 204.1 L1046.6 203.5 L1047.1 202.9 L1047.6 202.3 L1048.3 201.7 L1049.2 201.2 L1050.4 200.6 L1051.5 200.2 L1049.7 200.2 L1048.5 200.0 L1047.6 199.7 L1046.8 199.4 L1046.2 199.0 L1045.6 198.6 L1045.1 198.1 L1044.6 197.6 L1044.2 197.1 L1043.9 196.6 L1043.7 196.1 L1043.5 195.5 L1043.3 195.0 L1043.2 194.4 L1043.2 193.9 L1043.2 193.3 L1043.3 192.8 L1043.4 192.3 L1043.6 191.8 L1043.9 191.3 L1044.1 190.8 L1044.4 190.4 L1044.8 190.0 L1045.2 189.6 L1045.6 189.3 L1046.1 189.0 L1046.6 188.8 L1047.2 188.6 L1047.7 188.4 L1048.3 188.3 L1048.9 188.3 L1049.6 188.3 L1050.2 188.4 L1050.9 188.6 L1051.6 188.9 L1052.3 189.2 L1053.1 189.7 L1053.9 190.4 L1054.8 191.3 L1055.5 192.2 L1055.0 190.5 L1054.8 189.4 L1054.8 188.4 L1054.9 187.6 L1055.0 186.8 L1055.3 186.1 L1055.5 185.5 L1055.8 184.9 L1056.2 184.4 L1056.6 183.9 L1057.0 183.5 L1057.5 183.2 L1058.0 182.9 L1058.5 182.6 L1059.0 182.4 L1059.5 182.3 L1060.1 182.2 L1060.6 182.1 L1061.1 182.1 L1061.7 182.2 L1062.2 182.3 L1062.7 182.5 L1063.2 182.7 L1063.7 183.0 L1064.1 183.3 L1064.5 183.7 L1064.9 184.1 L1065.3 184.5 L1065.6 185.0 L1065.9 185.6 L1066.1 186.1 L1066.2 186.7 L1066.4 187.4 L1066.4 188.1 L1066.4 188.9 L1066.3 189.6 L1066.0 190.5 L1065.6 191.5 L1065.0 192.6 L1064.4 193.6 L1065.8 192.6 L1066.9 192.0 L1067.8 191.7 L1068.6 191.5 L1069.4 191.5 L1070.1 191.5 L1070.8 191.5 L1071.4 191.6 L1072.0 191.8 L1072.6 192.1 L1073.1 192.4 L1073.6 192.7 L1074.0 193.0 L1074.4 193.4 L1074.8 193.9 L1075.1 194.3 L1075.3 194.8 L1075.5 195.3 L1075.7 195.8 L1075.8 196.3 L1075.8 196.9 L1075.8 197.4 L1075.8 197.9 L1075.7 198.5 Z"/>
<path fill="#fff" stroke="#111" stroke-linecap="round" stroke-linejoin="round" stroke-width="2" d="M1069.0 247.0 L1069.3 247.6 L1069.4 248.1 L1069.6 248.7 L1069.7 249.3 L1069.7 249.9 L1069.7 250.4 L1069.6 251.0 L1069.5 251.6 L1069.4 252.1 L1069.2 252.7 L1068.9 253.2 L1068.6 253.7 L1068.3 254.2 L1067.9 254.6 L1067.5 255.1 L1067.0 255.5 L1066.5 255.8 L1066.0 256.2 L1065.4 256.4 L1064.7 256.6 L1064.0 256.8 L1063.1 256.8 L1062.6 257.0 L1063.0 257.9 L1063.2 258.7 L1063.3 259.4 L1063.3 260.0 L1063.2 260.7 L1063.0 261.3 L1062.9 261.9 L1062.6 262.4 L1062.4 263.0 L1062.1 263.5 L1061.7 263.9 L1061.3 264.4 L1060.9 264.8 L1060.5 265.1 L1060.0 265.4 L1059.5 265.7 L1059.0 266.0 L1058.4 266.2 L1057.8 266.3 L1057.3 266.4 L1056.7 266.5 L1056.1 266.5 L1055.5 266.4 L1054.8 266.3 L1054.2 266.2 L1053.6 265.9 L1053.0 265.6 L1052.4 265.2 L1051.7 264.6 L1051.2 264.4 L1050.9 265.3 L1050.5 266.0 L1050.1 266.5 L1049.6 267.0 L1049.1 267.4 L1048.5 267.7 L1048.0 268.0 L1047.4 268.3 L1046.9 268.4 L1046.3 268.6 L1045.7 268.7 L1045.1 268.7 L1044.6 268.7 L1044.0 268.6 L1043.4 268.5 L1042.9 268.4 L1042.3 268.2 L1041.8 267.9 L1041.3 267.6 L1040.8 267.3 L1040.4 266.9 L1039.9 266.5 L1039.5 266.0 L1039.2 265.5 L1038.8 265.0 L1038.6 264.4 L1038.4 263.7 L1038.2 263.0 L1038.2 262.1 L1038.0 261.6 L1037.1 262.0 L1036.3 262.2 L1035.6 262.3 L1035.0 262.3 L1034.3 262.2 L1033.7 262.0 L1033.1 261.9 L1032.6 261.6 L1032.0 261.4 L1031.5 261.1 L1031.1 260.7 L1030.6 260.3 L1030.2 259.9 L1029.9 259.5 L1029.6 259.0 L1029.3 258.5 L1029.0 258.0 L1028.8 257.4 L1028.7 256.8 L1028.6 256.3 L1028.5 255.7 L1028.5 255.1 L1028.6 254.5 L1028.7 253.8 L1028.8 253.2 L1029.1 252.6 L1029.4 252.0 L1029.8 251.4 L1030.4 250.7 L1030.6 250.2 L1029.7 249.9 L1029.0 249.5 L1028.5 249.1 L1028.0 248.6 L1027.6 248.1 L1027.3 247.5 L1027.0 247.0 L1026.7 246.4 L1026.6 245.9 L1026.4 245.3 L1026.3 244.7 L1026.3 244.1 L1026.3 243.6 L1026.4 243.0 L1026.5 242.4 L1026.6 241.9 L1026.8 241.3 L1027.1 240.8 L1027.4 240.3 L1027.7 239.8 L1028.1 239.4 L1028.5 238.9 L1029.0 238.5 L1029.5 238.2 L1030.0 237.8 L1030.6 237.6 L1031.3 237.4 L1032.0 237.2 L1032.9 237.2 L1033.4 237.0 L1033.0 236.1 L1032.8 235.3 L1032.7 234.6 L1032.7 234.0 L1032.8 233.3 L1033.0 232.7 L1033.1 232.1 L1033.4 231.6 L1033.6 231.0 L1033.9 230.5 L1034.3 230.1 L1034.7 229.6 L1035.1 229.2 L1035.5 228.9 L1036.0 228.6 L1036.5 228.3 L1037.0 228.0 L1037.6 227.8 L1038.2 227.7 L1038.7 227.6 L1039.3 227.5 L1039.9 227.5 L1040.5 227.6 L1041.2 227.7 L1041.8 227.8 L1042.4 228.1 L1043.0 228.4 L1043.6 228.8 L1044.3 229.4 L1044.8 229.6 L1045.1 228.7 L1045.5 228.0 L1045.9 227.5 L1046.4 227.0 L1046.9 226.6 L1047.5 226.3 L1048.0 226.0 L1048.6 225.7 L1049.1 225.6 L1049.7 225.4 L1050.3 225.3 L1050.9 225.3 L1051.4 225.3 L1052.0 225.4 L1052.6 225.5 L1053.1 225.6 L1053.7 225.8 L1054.2 226.1 L1054.7 226.4 L1055.2 226.7 L1055.6 227.1 L1056.1 227.5 L1056.5 228.0 L1056.8 228.5 L1057.2 229.0 L1057.4 229.6 L1057.6 230.3 L1057.8 231.0 L1057.8 231.9 L1058.0 232.4 L1058.9 232.0 L1059.7 231.8 L1060.4 231.7 L1061.0 231.7 L1061.7 231.8 L1062.3 232.0 L1062.9 232.1 L1063.4 232.4 L1064.0 232.6 L1064.5 232.9 L1064.9 233.3 L1065.4 233.7 L1065.8 234.1 L1066.1 234.5 L1066.4 235.0 L1066.7 235.5 L1067.0 236.0 L1067.2 236.6 L1067.3 237.2 L1067.4 237.7 L1067.5 238.3 L1067.5 238.9 L1067.4 239.5 L1067.3 240.2 L1067.2 240.8 L1066.9 241.4 L1066.6 242.0 L1066.2 242.6 L1065.6 243.3 L1065.4 243.8 L1066.3 244.1 L1067.0 244.5 L1067.5 244.9 L1068.0 245.4 L1068.4 245.9 L1068.7 246.5 Z"/>
<circle fill="#fff" stroke="#111" stroke-linecap="round" stroke-linejoin="round" stroke-width="2.2" cx="1048" cy="247" r="8.5"/>
<path fill="none" stroke="#111" stroke-linecap="round" stroke-linejoin="round" stroke-width="1.8" d="M805 361.2 L815 361.2 A33 33 0 0 1 847.8 394 L847.8 611 A33 33 0 0 1 815 643.6 L676 643.6 A31 31 0 0 1 644.6 612 L644.6 392"/>
<path fill="none" stroke="#111" stroke-linecap="round" stroke-linejoin="round" stroke-width="1.6" d="M666 362.5 C660 364 656 367 653.5 370.5"/>
<path fill="#fff" stroke="#111" stroke-linecap="round" stroke-linejoin="round" stroke-width="1.7" d="M660.0 380.0 L660.0 380.4 L660.0 380.8 L659.9 381.2 L659.8 381.6 L659.6 382.0 L659.5 382.3 L659.2 382.7 L659.0 383.0 L658.7 383.3 L658.4 383.6 L658.0 383.9 L657.6 384.1 L657.2 384.3 L656.7 384.5 L656.2 384.6 L655.7 384.7 L655.1 384.7 L654.5 384.6 L653.7 384.5 L652.9 384.2 L651.7 383.5 L652.4 384.3 L653.0 385.1 L653.3 385.8 L653.6 386.4 L653.7 386.9 L653.8 387.5 L653.8 388.0 L653.8 388.5 L653.7 389.0 L653.6 389.4 L653.5 389.9 L653.3 390.3 L653.0 390.6 L652.8 391.0 L652.5 391.3 L652.2 391.5 L651.9 391.8 L651.5 392.0 L651.2 392.2 L650.8 392.3 L650.4 392.4 L650.0 392.4 L649.6 392.5 L649.2 392.4 L648.8 392.4 L648.4 392.3 L648.0 392.1 L647.6 392.0 L647.2 391.7 L646.8 391.5 L646.5 391.2 L646.2 390.8 L645.9 390.4 L645.6 390.0 L645.4 389.5 L645.2 388.9 L645.1 388.3 L645.0 387.6 L645.0 386.7 L645.3 385.3 L644.7 386.3 L644.1 387.1 L643.6 387.6 L643.1 388.0 L642.6 388.4 L642.1 388.6 L641.6 388.8 L641.1 388.9 L640.7 389.0 L640.2 389.0 L639.8 389.0 L639.3 388.9 L638.9 388.8 L638.5 388.7 L638.1 388.5 L637.8 388.3 L637.4 388.1 L637.1 387.8 L636.9 387.5 L636.6 387.2 L636.4 386.9 L636.2 386.5 L636.1 386.1 L636.0 385.7 L635.9 385.3 L635.9 384.9 L635.9 384.5 L635.9 384.1 L636.0 383.6 L636.2 383.2 L636.4 382.8 L636.6 382.4 L636.9 382.0 L637.2 381.6 L637.6 381.2 L638.1 380.9 L638.6 380.5 L639.3 380.2 L640.1 380.0 L641.5 379.8 L640.4 379.6 L639.5 379.3 L638.9 378.9 L638.3 378.6 L637.8 378.2 L637.4 377.8 L637.1 377.4 L636.9 377.0 L636.6 376.6 L636.5 376.1 L636.3 375.7 L636.3 375.3 L636.2 374.8 L636.2 374.4 L636.3 374.0 L636.4 373.6 L636.5 373.2 L636.7 372.8 L636.9 372.5 L637.1 372.2 L637.3 371.8 L637.6 371.6 L637.9 371.3 L638.3 371.1 L638.7 370.9 L639.0 370.7 L639.4 370.6 L639.9 370.5 L640.3 370.5 L640.7 370.5 L641.2 370.5 L641.7 370.6 L642.1 370.8 L642.6 371.0 L643.1 371.3 L643.6 371.6 L644.0 372.0 L644.5 372.6 L645.0 373.3 L645.6 374.6 L645.5 373.4 L645.5 372.5 L645.6 371.7 L645.8 371.1 L646.0 370.5 L646.3 370.1 L646.5 369.6 L646.9 369.2 L647.2 368.9 L647.6 368.6 L647.9 368.3 L648.3 368.1 L648.7 368.0 L649.1 367.9 L649.5 367.8 L649.9 367.7 L650.4 367.7 L650.8 367.8 L651.2 367.8 L651.5 368.0 L651.9 368.1 L652.3 368.3 L652.6 368.5 L652.9 368.8 L653.2 369.1 L653.5 369.4 L653.7 369.7 L653.9 370.1 L654.1 370.5 L654.2 370.9 L654.3 371.4 L654.4 371.8 L654.4 372.3 L654.4 372.8 L654.2 373.4 L654.1 373.9 L653.8 374.5 L653.5 375.1 L652.9 375.8 L651.9 376.8 L652.9 376.4 L653.8 376.1 L654.6 375.9 L655.2 375.9 L655.8 375.9 L656.4 376.0 L656.9 376.2 L657.3 376.4 L657.8 376.6 L658.2 376.8 L658.5 377.1 L658.8 377.4 L659.1 377.7 L659.3 378.1 L659.6 378.4 L659.7 378.8 L659.8 379.2 L659.9 379.6 Z"/>
<path fill="none" stroke="#111" stroke-linecap="round" stroke-linejoin="round" stroke-width="1.8" d="M1034.5 360.8 L1036 360.8 A27.5 27.5 0 0 1 1063.3 388 L1063.3 462 M1036 480.2 L887 480.2 A28.5 28.5 0 0 1 858.5 452 L858.5 389 A28 28 0 0 1 881 361.5"/>
<path fill="#fff" stroke="#111" stroke-linecap="round" stroke-linejoin="round" stroke-width="2" d="M1073.2 479.5 L1074.6 480.0 L1075.3 480.5 L1075.9 481.1 L1076.3 481.7 L1076.6 482.3 L1076.9 482.9 L1077.2 483.5 L1077.3 484.1 L1077.4 484.7 L1077.5 485.3 L1077.5 485.9 L1077.4 486.6 L1077.3 487.2 L1077.2 487.7 L1076.9 488.3 L1076.7 488.8 L1076.4 489.4 L1076.0 489.9 L1075.7 490.3 L1075.2 490.8 L1074.8 491.2 L1074.2 491.5 L1073.7 491.9 L1073.1 492.1 L1072.5 492.4 L1071.8 492.5 L1071.1 492.6 L1070.3 492.6 L1069.4 492.5 L1068.1 491.9 L1068.7 493.2 L1068.8 494.1 L1068.8 494.9 L1068.7 495.6 L1068.6 496.3 L1068.3 496.9 L1068.1 497.5 L1067.7 498.0 L1067.4 498.6 L1067.0 499.0 L1066.5 499.5 L1066.1 499.8 L1065.6 500.2 L1065.0 500.5 L1064.5 500.7 L1063.9 501.0 L1063.4 501.1 L1062.8 501.2 L1062.1 501.3 L1061.5 501.3 L1060.9 501.2 L1060.3 501.1 L1059.7 501.0 L1059.1 500.7 L1058.5 500.4 L1057.9 500.1 L1057.3 499.7 L1056.7 499.1 L1056.2 498.4 L1055.7 497.0 L1055.2 498.4 L1054.7 499.1 L1054.1 499.7 L1053.5 500.1 L1052.9 500.4 L1052.3 500.7 L1051.7 501.0 L1051.1 501.1 L1050.5 501.2 L1049.9 501.3 L1049.3 501.3 L1048.6 501.2 L1048.0 501.1 L1047.5 501.0 L1046.9 500.7 L1046.4 500.5 L1045.8 500.2 L1045.3 499.8 L1044.9 499.5 L1044.4 499.0 L1044.0 498.6 L1043.7 498.0 L1043.3 497.5 L1043.1 496.9 L1042.8 496.3 L1042.7 495.6 L1042.6 494.9 L1042.6 494.1 L1042.7 493.2 L1043.3 491.9 L1042.0 492.5 L1041.1 492.6 L1040.3 492.6 L1039.6 492.5 L1038.9 492.4 L1038.3 492.1 L1037.7 491.9 L1037.2 491.5 L1036.6 491.2 L1036.2 490.8 L1035.7 490.3 L1035.4 489.9 L1035.0 489.4 L1034.7 488.8 L1034.5 488.3 L1034.2 487.7 L1034.1 487.2 L1034.0 486.6 L1033.9 485.9 L1033.9 485.3 L1034.0 484.7 L1034.1 484.1 L1034.2 483.5 L1034.5 482.9 L1034.8 482.3 L1035.1 481.7 L1035.5 481.1 L1036.1 480.5 L1036.8 480.0 L1038.2 479.5 L1036.8 479.0 L1036.1 478.5 L1035.5 477.9 L1035.1 477.3 L1034.8 476.7 L1034.5 476.1 L1034.2 475.5 L1034.1 474.9 L1034.0 474.3 L1033.9 473.7 L1033.9 473.1 L1034.0 472.4 L1034.1 471.8 L1034.2 471.3 L1034.5 470.7 L1034.7 470.2 L1035.0 469.6 L1035.4 469.1 L1035.7 468.7 L1036.2 468.2 L1036.6 467.8 L1037.2 467.5 L1037.7 467.1 L1038.3 466.9 L1038.9 466.6 L1039.6 466.5 L1040.3 466.4 L1041.1 466.4 L1042.0 466.5 L1043.3 467.1 L1042.7 465.8 L1042.6 464.9 L1042.6 464.1 L1042.7 463.4 L1042.8 462.7 L1043.1 462.1 L1043.3 461.5 L1043.7 461.0 L1044.0 460.4 L1044.4 460.0 L1044.9 459.5 L1045.3 459.2 L1045.8 458.8 L1046.4 458.5 L1046.9 458.3 L1047.5 458.0 L1048.0 457.9 L1048.6 457.8 L1049.3 457.7 L1049.9 457.7 L1050.5 457.8 L1051.1 457.9 L1051.7 458.0 L1052.3 458.3 L1052.9 458.6 L1053.5 458.9 L1054.1 459.3 L1054.7 459.9 L1055.2 460.6 L1055.7 462.0 L1056.2 460.6 L1056.7 459.9 L1057.3 459.3 L1057.9 458.9 L1058.5 458.6 L1059.1 458.3 L1059.7 458.0 L1060.3 457.9 L1060.9 457.8 L1061.5 457.7 L1062.1 457.7 L1062.8 457.8 L1063.4 457.9 L1063.9 458.0 L1064.5 458.3 L1065.0 458.5 L1065.6 458.8 L1066.1 459.2 L1066.5 459.5 L1067.0 460.0 L1067.4 460.4 L1067.7 461.0 L1068.1 461.5 L1068.3 462.1 L1068.6 462.7 L1068.7 463.4 L1068.8 464.1 L1068.8 464.9 L1068.7 465.8 L1068.1 467.1 L1069.4 466.5 L1070.3 466.4 L1071.1 466.4 L1071.8 466.5 L1072.5 466.6 L1073.1 466.9 L1073.7 467.1 L1074.2 467.5 L1074.8 467.8 L1075.2 468.2 L1075.7 468.7 L1076.0 469.1 L1076.4 469.6 L1076.7 470.2 L1076.9 470.7 L1077.2 471.3 L1077.3 471.8 L1077.4 472.4 L1077.5 473.1 L1077.5 473.7 L1077.4 474.3 L1077.3 474.9 L1077.2 475.5 L1076.9 476.1 L1076.6 476.7 L1076.3 477.3 L1075.9 477.9 L1075.3 478.5 L1074.6 479.0 Z"/>
<circle fill="#fff" stroke="#111" stroke-linecap="round" stroke-linejoin="round" stroke-width="3" cx="1055.7" cy="479.5" r="8.6"/>
<path fill="none" stroke="#111" stroke-linecap="round" stroke-linejoin="round" stroke-width="1.8" d="M1033.5 511.5 A28 28 0 0 1 1062.6 540 L1062.6 612 C1062.5 618 1061 622 1059.5 625 M1026 643.8 L886 643.6 A28 28 0 0 1 858 616 L858 540 A28 28 0 0 1 881 511.8"/>
<g transform="translate(625,572) scale(0.09667)" stroke="#1a1a1a" stroke-width="12.5" stroke-linecap="round" stroke-linejoin="round">
<path fill="#fff" d="M262 380 C235 450 225 560 270 640 C300 690 420 695 455 650 C495 590 485 450 440 372 Z"/>
<path fill="none" d="M300 385 L330 505 L350 510 L345 390 M352 390 L362 500 L380 495 L378 385"/>
<path fill="none" d="M278 580 C290 572 305 575 310 588 M450 570 C460 565 470 568 472 578"/>
<path fill="#fff" d="M160 255 C150 180 200 90 330 68 C450 60 515 150 522 270 C528 340 525 400 500 418 C480 400 470 330 455 270 C440 215 400 170 340 168 C270 170 235 220 232 290 C230 350 240 400 236 440 C200 400 185 330 160 255 Z"/>
<path fill="none" d="M200 235 C215 160 270 120 340 118 C400 120 450 150 470 200"/>
<circle cx="205" cy="100" r="14" fill="#fff"/>
<ellipse cx="346" cy="278" rx="106" ry="98" fill="#fff"/>
<path fill="none" d="M278 212 C290 198 310 198 322 208 M380 198 C392 184 412 182 426 190 M350 208 L352 222"/>
<path fill="#fff" d="M315 275 C340 255 410 250 435 268 C435 320 400 340 372 338 C335 335 315 310 315 275 Z"/>
<path fill="none" d="M330 305 C360 290 400 290 425 300"/>
<path fill="none" d="M205 400 C170 380 140 350 112 322 M522 362 C560 340 600 310 638 282"/>
<path fill="#fff" d="M112 322 C95 330 70 325 65 308 C68 295 85 295 95 300 C98 288 115 288 120 300 C125 310 120 318 112 322 Z"/>
<path fill="#fff" d="M638 282 C625 268 632 250 648 252 C655 240 672 245 672 258 C688 255 690 272 678 280 C665 290 648 292 638 282 Z"/>
<path fill="#fff" d="M345 690 C345 740 335 790 312 822 C305 835 320 840 335 835 L372 815 C378 780 380 740 378 695"/>
<path fill="#fff" d="M410 695 C415 740 425 780 440 810 C450 822 480 815 492 800 C495 790 480 785 465 790 C450 760 445 725 440 690"/>
</g>
<g transform="translate(625,572) scale(0.09667)" stroke="#1a1a1a" stroke-width="12.5" stroke-linecap="round" stroke-linejoin="round">
<path fill="none" d="M940 250 C890 250 860 290 870 340 C880 400 860 440 815 462 C870 470 920 440 935 380 M915 290 C905 340 910 380 900 410"/>
<path fill="none" d="M1255 340 C1270 420 1320 500 1410 525 C1350 545 1290 520 1250 470 C1220 430 1205 400 1200 380 M1240 420 C1260 470 1310 510 1360 520"/>
<path fill="#fff" d="M870 695 C820 710 760 720 720 722 C712 740 700 745 695 730 C690 715 685 700 695 692 C705 690 712 700 716 705 C760 700 810 690 845 672"/>
<path fill="none" d="M1075 730 C1085 760 1105 790 1135 805 C1170 815 1210 800 1235 785 C1245 770 1262 775 1258 792 C1250 805 1235 805 1228 798"/>
<path fill="#fff" d="M985 455 C940 500 905 580 900 650 C880 660 850 670 840 690 C900 720 1060 740 1130 715 C1135 640 1140 540 1120 470 C1080 480 1020 475 985 455 Z"/>
<path fill="none" d="M900 650 C960 680 1060 695 1130 690"/>
<path fill="none" d="M1040 478 L1065 580 L1085 570 L1110 485 M1065 580 L1080 600"/>
<path fill="none" d="M955 470 C900 480 850 490 805 500 M1135 500 C1170 530 1200 560 1228 580"/>
<path fill="#fff" d="M805 500 C800 515 775 520 760 510 C755 495 770 490 780 492 C785 480 805 482 805 500 Z"/>
<path fill="#fff" d="M1228 580 C1240 565 1265 570 1272 585 C1285 590 1280 612 1262 615 C1240 620 1222 605 1228 580 Z"/>
<ellipse cx="1085" cy="345" rx="132" ry="125" fill="#fff"/>
<path fill="#fff" d="M958 222 C985 175 1080 150 1160 175 C1220 195 1262 250 1262 305 L1250 350 C1170 290 1040 262 940 268 Z"/>
<path fill="none" d="M950 218 C1040 210 1180 250 1262 305 M1000 222 L990 262 M1060 230 L1050 266 M1120 246 L1108 278 M1180 270 L1166 300"/>
<circle cx="1150" cy="165" r="13" fill="#fff"/>
<path fill="none" d="M985 335 C1000 318 1025 318 1040 332 M1125 362 C1140 345 1165 348 1180 362 M1065 360 C1070 368 1078 368 1082 362 M1018 388 C1040 420 1090 425 1115 400 M1248 352 C1262 365 1260 395 1245 410"/>
</g>
<g transform="translate(1005,580) scale(0.11158)" stroke="#1a1a1a" stroke-width="11.5" stroke-linecap="round" stroke-linejoin="round">
<path fill="none" d="M205 310 C215 270 220 230 222 195 M210 320 C250 280 275 250 292 215 M215 325 C270 300 320 270 355 245 M190 370 C180 420 180 500 205 575"/>
<ellipse cx="220" cy="120" rx="50" ry="76" transform="rotate(-8 220 120)" fill="#fff"/>
<ellipse cx="300" cy="150" rx="56" ry="66" transform="rotate(10 300 150)" fill="#fff"/>
<ellipse cx="425" cy="185" rx="68" ry="58" transform="rotate(-35 425 185)" fill="#fff"/>
<path fill="#fff" d="M185 325 C200 295 235 310 230 345 C225 375 190 380 180 355 C178 345 180 335 185 325 Z"/>
<path fill="none" d="M165 385 L110 395 M168 392 L125 425 M172 400 L148 450 M178 405 L170 440"/>
<path fill="none" d="M460 540 C490 550 500 590 480 610 C470 600 465 585 468 575"/>
<path fill="#fff" d="M300 590 C260 650 200 720 150 780 C220 810 330 820 392 800 C385 740 380 680 372 620 Z"/>
<ellipse cx="322" cy="735" rx="22" ry="29" transform="rotate(15 322 735)" fill="none"/>
<path fill="none" d="M205 575 C215 600 240 610 262 600 M380 630 C430 640 480 638 522 628"/>
<path fill="#fff" d="M522 628 C525 600 560 595 575 612 C590 625 580 655 555 655 C535 655 522 645 522 628 Z"/>
<ellipse cx="350" cy="502" rx="112" ry="92" fill="#fff"/>
<path fill="#fff" d="M245 452 C255 380 320 335 390 338 C450 345 490 400 488 445 C420 405 320 400 245 452 Z"/>
<path fill="none" d="M255 432 C320 395 420 400 478 455 M262 470 C330 425 410 430 470 478"/>
<path fill="none" d="M262 498 C275 480 298 480 310 494 M385 522 C398 505 420 508 432 522 M335 518 L345 522 M290 540 C320 575 375 580 405 555"/>
<path fill="none" d="M240 800 L236 850 M300 810 C320 825 345 835 365 840"/>
<path fill="#fff" d="M236 850 C222 855 220 880 235 884 C248 880 248 858 236 850 Z"/>
<path fill="#fff" d="M365 840 C375 825 400 835 392 850 C380 860 362 855 365 840 Z"/>
</g>
</svg>
<div class="db" style="left:607.3px;top:170.4px;width:103.3px;height:114.7px;"></div>
<div class="db" style="left:993.6px;top:179.6px;width:110.0px;height:94.8px;"></div>
<div class="db" style="left:690.1px;top:195.3px;width:327.5px;height:51.7px;"></div>
<div class="db" style="left:645.6px;top:294.5px;width:410.4px;height:16.9px;"></div>
<div class="db" style="left:645.6px;top:315.0px;width:414.4px;height:17.2px;"></div>
<div class="db" style="left:670.0px;top:356.5px;width:130.5px;height:19.0px;"></div>
<div class="db" style="left:887.0px;top:356.5px;width:144.0px;height:19.0px;"></div>
<div class="db" style="left:885.0px;top:499.5px;width:144.5px;height:19.0px;"></div>
<div class="db" style="left:660.5px;top:393.1px;width:177.5px;height:176.6px;"></div>
<div class="db" style="left:873.0px;top:394.8px;width:175.9px;height:64.4px;"></div>
<div class="db" style="left:1030.7px;top:455.5px;width:49.1px;height:47.5px;"></div>
<div class="db" style="left:877.6px;top:539.2px;width:163.1px;height:69.1px;"></div>
<div class="db" style="left:629.3px;top:576.5px;width:133.1px;height:77.3px;"></div>
<div class="db" style="left:1016.5px;top:586.6px;width:55.6px;height:92.3px;"></div>
<div class="db" style="left:625.8px;top:692.3px;width:230.2px;height:97.9px;"></div>
<div class="db" style="left:669.2px;top:794.2px;width:175.7px;height:14.2px;"></div>
<div class="db" style="left:861.5px;top:695.3px;width:218.2px;height:23.8px;"></div>
<div class="db" style="left:861.5px;top:720.6px;width:165.1px;height:11.1px;"></div>
<div class="db" style="left:860.0px;top:733.7px;width:218.0px;height:25.2px;"></div>
<div class="db" style="left:860.5px;top:768.4px;width:178.2px;height:38.3px;"></div>
<div class="d" style="left:692.5px;top:200.4px;font-size:47px;letter-spacing:1.5px;font-weight:500;-webkit-text-stroke:0.9px #111;transform:scaleY(0.95);">学芸会</div>
<div class="d" style="left:839.0px;top:203.4px;font-size:39.5px;letter-spacing:0px;font-weight:500;-webkit-text-stroke:0.8px #111;">の</div>
<div class="d" style="left:880.5px;top:204.3px;font-size:39px;letter-spacing:0px;font-weight:500;-webkit-text-stroke:0.9px #111;">ご</div>
<div class="d" style="left:925.4px;top:200.8px;font-size:46px;letter-spacing:1.6px;font-weight:500;-webkit-text-stroke:0.9px #111;transform:scaleY(0.95);">案内</div>
<div class="d" style="left:648.8px;top:297.6px;font-size:13px;letter-spacing:1.42px;font-weight:700;">自分たちの考えを伝えるために、調べ・まとめ・発表する力を</div>
<div class="d" style="left:649.5px;top:318.7px;font-size:13px;letter-spacing:1.24px;font-weight:700;">精一杯発揮します。当日はぜひ温かい拍手で応援してください！</div>
<div class="d" style="left:674.0px;top:360.0px;font-size:15px;letter-spacing:0.35px;font-weight:700;">体育館：舞台発表</div>
<div class="d" style="left:889.0px;top:360.5px;font-size:15px;letter-spacing:0.4px;font-weight:700;">視聴覚室：作品展示</div>
<div class="d" style="left:888.0px;top:503.0px;font-size:15px;letter-spacing:0.4px;font-weight:700;">各教室：成果物展示</div>
<div class="d" style="left:663.5px;top:396.1px;font-size:13px;letter-spacing:1.4px;font-weight:500;word-spacing:-2px;-webkit-text-stroke:0.3px #111;">X 年 X 組：劇</div>
<div class="d" style="left:654.3px;top:418.2px;font-size:13px;letter-spacing:1.68px;font-weight:500;-webkit-text-stroke:0.3px #111;">「未来の日本、どうなる？」</div>
<div class="d" style="left:663.5px;top:442.0px;font-size:13px;letter-spacing:1.4px;font-weight:500;word-spacing:-2px;-webkit-text-stroke:0.3px #111;">X 年 X 組：プレゼン</div>
<div class="d" style="left:654.3px;top:464.9px;font-size:13px;letter-spacing:1.68px;font-weight:500;-webkit-text-stroke:0.3px #111;">「世界の国と日本」</div>
<div class="d" style="left:663.5px;top:487.9px;font-size:13px;letter-spacing:1.4px;font-weight:500;word-spacing:-2px;-webkit-text-stroke:0.3px #111;">X 年 X 組：朗読劇</div>
<div class="d" style="left:654.3px;top:509.8px;font-size:13px;letter-spacing:1.68px;font-weight:500;-webkit-text-stroke:0.3px #111;">「戦争と平和」</div>
<div class="d" style="left:663.5px;top:533.8px;font-size:13px;letter-spacing:1.4px;font-weight:500;word-spacing:-2px;-webkit-text-stroke:0.3px #111;">X 年 X 組：</div>
<div class="d" style="left:654.3px;top:555.8px;font-size:13px;letter-spacing:1.68px;font-weight:500;-webkit-text-stroke:0.3px #111;">「この地球のどこかて」</div>
<div class="d" style="left:866.3px;top:398.8px;font-size:13px;letter-spacing:1.68px;font-weight:500;-webkit-text-stroke:0.3px #111;">「未来の地球、どうなる？」</div>
<div class="d" style="left:866.3px;top:421.8px;font-size:13px;letter-spacing:1.68px;font-weight:500;-webkit-text-stroke:0.3px #111;">「地域の自然を知る」</div>
<div class="d" style="left:866.3px;top:445.6px;font-size:13px;letter-spacing:1.68px;font-weight:500;-webkit-text-stroke:0.3px #111;">「伝統と産業の発展」</div>
<div class="d" style="left:880.6px;top:542.1px;font-size:13px;letter-spacing:1.45px;font-weight:500;-webkit-text-stroke:0.3px #111;">図画工作作品展示</div>
<div class="d" style="left:880.6px;top:567.2px;font-size:13px;letter-spacing:1.45px;font-weight:500;-webkit-text-stroke:0.3px #111;">習字コンクール作品展示</div>
<div class="d" style="left:880.6px;top:593.1px;font-size:13px;letter-spacing:1.45px;font-weight:500;-webkit-text-stroke:0.3px #111;">まとめ学習作品展示</div>
<div class="abs" style="left:630.7px;top:700.4px;width:33.5px;height:20.5px;border:1.6px solid #111;border-radius:8px"></div>
<div class="d" style="left:635.5px;top:705.0px;font-size:12px;letter-spacing:0px;font-weight:700;">日時</div>
<div class="d" style="left:669.3px;top:691.1px;font-size:35.5px;letter-spacing:0px;font-weight:700;">3</div>
<div class="d" style="left:694.0px;top:702.7px;font-size:20px;letter-spacing:0px;font-weight:700;">月</div>
<div class="d" style="left:719.8px;top:691.1px;font-size:35.5px;letter-spacing:-1.6px;font-weight:700;">10</div>
<div class="d" style="left:764.0px;top:702.7px;font-size:20px;letter-spacing:0px;font-weight:700;">日</div>
<div class="d" style="left:781.5px;top:704.1px;font-size:18px;letter-spacing:-2.2px;font-weight:700;">（月）</div>
<div class="d" style="left:671.0px;top:731.1px;font-size:23px;letter-spacing:0.65px;font-weight:700;">13:00～14:00</div>
<div class="abs" style="left:629.9px;top:767px;width:36.3px;height:21.2px;border:1.6px solid #111;border-radius:8.5px"></div>
<div class="d" style="left:636.0px;top:772.0px;font-size:12px;letter-spacing:0px;font-weight:700;">会場</div>
<div class="d" style="left:672.0px;top:767.6px;font-size:20.5px;letter-spacing:1.1px;font-weight:500;-webkit-text-stroke:0.3px #111;">〇〇小学校 体育館</div>
<div class="d" style="left:672.5px;top:797.4px;font-size:10.5px;letter-spacing:0.75px;font-weight:700;">スリッパ・靴袋をご持参ください</div>
<div class="d" style="left:861.3px;top:697.9px;font-size:8.9px;letter-spacing:0.0px;font-weight:700;">・正門にて受付を行います。招待状をご持参ください。</div>
<div class="d" style="left:861.3px;top:710.0px;font-size:8.9px;letter-spacing:0.0px;font-weight:700;">・スリッパ、靴袋をご持参ください。</div>
<div class="d" style="left:861.3px;top:723.1px;font-size:8.9px;letter-spacing:0.0px;font-weight:700;">・学校の駐車スペースは利用できません。</div>
<div class="d" style="left:861.3px;top:737.2px;font-size:8.9px;letter-spacing:-0.15px;font-weight:700;">・個人利用の範囲で撮影可能ですが、SNS 等への無断</div>
<div class="d" style="left:864.3px;top:749.4px;font-size:8.9px;letter-spacing:0.0px;font-weight:700;">掲載はご遠慮ください。</div>
<div class="d" style="left:864.2px;top:771.2px;font-size:13px;letter-spacing:1.42px;font-weight:700;">保護者の皆さまのご来場を</div>
<div class="d" style="left:864.2px;top:792.6px;font-size:13px;letter-spacing:1.42px;font-weight:700;">心よりお待ちしております</div>
</div>
<!-- DOC END -->

</div>
</body>
</html>
